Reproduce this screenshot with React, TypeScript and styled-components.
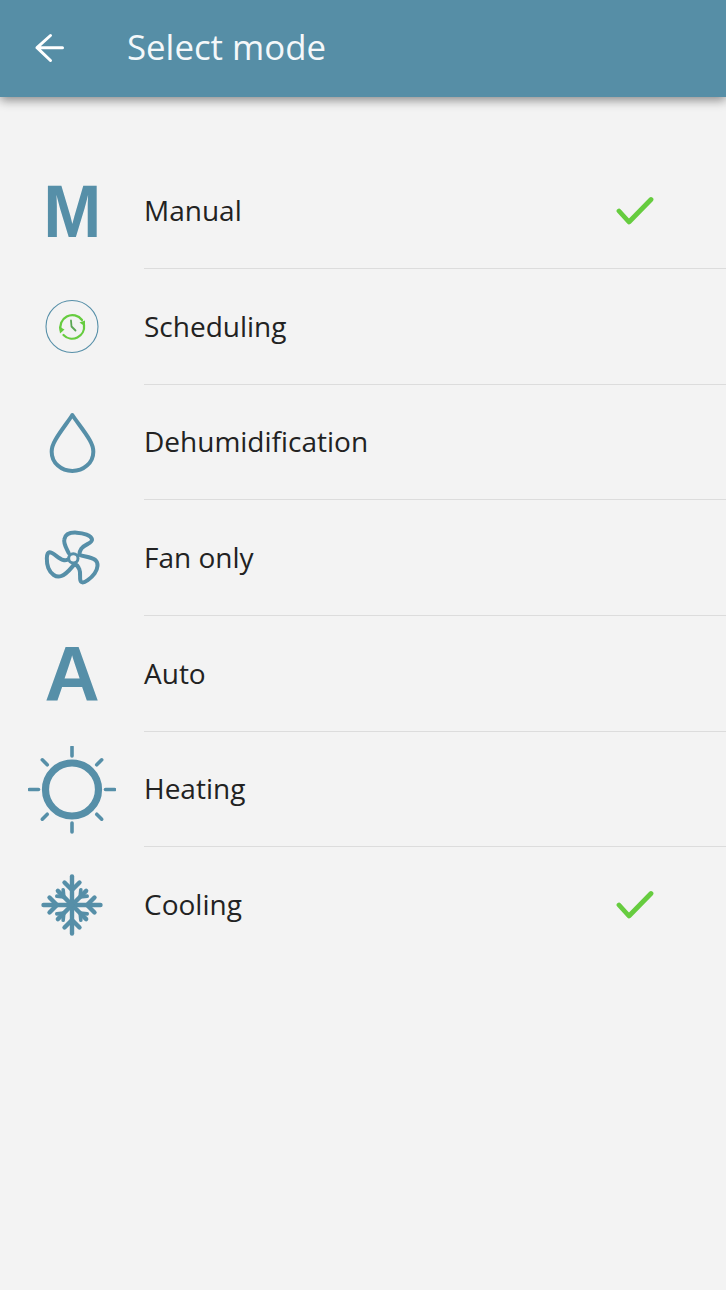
import React from "react";
import styled, { createGlobalStyle } from "styled-components";

const Global = createGlobalStyle`
  html, body { margin: 0; padding: 0; background: #f3f3f3; }
  body { font-family: "Open Sans", "Liberation Sans", sans-serif; }
`;

const Page = styled.div`
  width: 726px;
  height: 1290px;
  background: #f3f3f3;
  overflow: hidden;
`;

const Header = styled.header`
  height: 97px;
  background: #568ea6;
  box-shadow: 0 3px 10px rgba(0, 0, 0, 0.45);
  display: flex;
  align-items: center;
  color: #fff;
`;

const BackButton = styled.div`
  width: 127px;
  height: 97px;
  display: flex;
  align-items: center;
`;

const Title = styled.h1`
  margin: 0 0 3px;
  font-size: 34.8px;
  font-weight: 400;
  color: #f4f8fa;
  line-height: 94px;
`;

const List = styled.div`
  padding-top: 56.4px;
  display: flex;
  flex-direction: column;
`;

const Row = styled.div`
  height: 115.67px;
  display: flex;
  align-items: center;
  padding-left: 28px;
  box-sizing: border-box;
`;

const IconSlot = styled.div`
  width: 88px;
  height: 88px;
  margin-right: 28px;
  flex: none;
  display: flex;
  align-items: center;
  justify-content: center;
  color: #568fa8;
`;

const LetterIcon = styled.span<{ $size: number; $stretch: number }>`
  display: inline-block;
  font-family: "Liberation Sans", Arial, sans-serif;
  font-weight: 700;
  font-size: ${(p) => p.$size}px;
  line-height: 88px;
  color: #568fa8;
  transform: scaleX(${(p) => p.$stretch});
`;

const Body = styled.div<{ $last?: boolean }>`
  flex: 1;
  align-self: stretch;
  display: flex;
  align-items: center;
  justify-content: space-between;
  border-bottom: ${(p) => (p.$last ? "none" : "1px solid #dcdcdc")};
`;

const Label = styled.span`
  font-size: 28px;
  color: #222;
  margin-bottom: 1.5px;
`;

const CheckBox = styled.div`
  width: 110px;
  height: 60px;
  flex: none;
`;

const Check = () => (
  <CheckBox>
    <svg width="110" height="60" viewBox="616 181 110 60" fill="none">
      <path d="M619 211 L629 222 L651 199.5" stroke="#66cc3f" strokeWidth="4.8" strokeLinecap="round" strokeLinejoin="round" />
    </svg>
  </CheckBox>
);

const ClockIcon = () => (
  <svg width="88" height="88" viewBox="0 0 88 88" fill="none">
    <circle cx="44" cy="43.5" r="26" stroke="#568fa8" strokeWidth="1.1" />
    <path d="M33 48 A12 12 0 0 1 54 37" stroke="#66cc3f" strokeWidth="2.3" strokeLinecap="round" />
    <path d="M56 42 A12 12 0 0 1 35.5 52" stroke="#66cc3f" strokeWidth="2.3" strokeLinecap="round" />
    <path d="M31 43.5 L36.5 46.5 L32 50.5 Z" fill="#66cc3f" />
    <path d="M51.5 39.5 L57 37.5 L57 43.5 Z" fill="#66cc3f" />
    <path d="M43 37.5 L43.5 43.5 L47.5 47.5" stroke="#5aa653" strokeWidth="1.8" strokeLinecap="round" strokeLinejoin="round" />
  </svg>
);

const DropIcon = () => (
  <svg width="88" height="88" viewBox="24 -5 264 264" fill="none">
    <path d="M157 43 C145 62 120 93 106 118 C98 132 95 142 95 153 C95 187 124 211 157 211 C190 211 220 187 220 153 C220 142 217 132 209 118 C195 93 169 62 157 43 Z" stroke="currentColor" strokeWidth="12" strokeLinejoin="round" />
  </svg>
);

const FanIcon = () => (
  <svg width="88" height="88" viewBox="24 342 264 264" fill="none">
    <path d="M146 459 C140 445 130 432 133 418 C136 402 152 397 170 398 C190 399 214 406 216 418 C218 430 194 432 184 446 C180 452 178 458 178 464 C190 470 212 470 226 480 C236 488 234 506 224 520 C214 534 192 552 184 546 C176 540 184 522 178 508 C175 500 170 494 164 492 C154 502 144 520 124 528 C108 534 92 522 85 504 C79 488 78 458 88 457 C100 456 114 476 130 480 C134 481 138 481 142 479" stroke="currentColor" strokeWidth="12" strokeLinejoin="round" strokeLinecap="round" />
    <circle cx="160" cy="475" r="14" stroke="currentColor" strokeWidth="9" />
  </svg>
);

const SunIcon = () => {
  const rays = [0, 45, 90, 135, 180, 225, 270, 315];
  return (
    <svg width="88" height="88" viewBox="-44 -43.5 88 88" fill="none">
      <circle r="26.5" stroke="currentColor" strokeWidth="7.2" />
      {rays.map((a) => (
        <line
          key={a}
          x1="0"
          y1={a % 90 === 0 ? -33.5 : -35}
          x2="0"
          y2={a % 90 === 0 ? -42.5 : -42}
          stroke="currentColor"
          strokeWidth="3.6"
          strokeLinecap="round"
          transform={`rotate(${a})`}
        />
      ))}
    </svg>
  );
};

const SnowIcon = () => {
  const arms = [0, 45, 90, 135, 180, 225, 270, 315];
  return (
    <svg width="88" height="88" viewBox="-44 -44 88 88" fill="none">
      {arms.map((a) => (
        <g key={a} transform={`rotate(${a})`} stroke="currentColor" strokeWidth="4.4" strokeLinecap="round" strokeLinejoin="round">
          {a % 90 === 0 ? (
            <>
              <line x1="0" y1="0" x2="0" y2="-28.5" />
              <path d="M-7.5 -22.5 L0 -15 L7.5 -22.5" />
            </>
          ) : (
            <>
              <line x1="0" y1="0" x2="0" y2="-20" />
              <path d="M-4.5 -17 L0 -11.5 L4.5 -17" strokeWidth="3.6" />
            </>
          )}
        </g>
      ))}
    </svg>
  );
};

const BackArrow = () => (
  <svg width="127" height="97" viewBox="0 0 127 97" fill="none">
    <path d="M37 47.7 H62.5 M50.5 35.5 L37 47.7 L50.5 60.5" stroke="#fff" strokeWidth="3" strokeLinecap="round" strokeLinejoin="round" />
  </svg>
);

const modes: { label: string; icon: React.ReactNode; checked?: boolean }[] = [
  { label: "Manual", icon: <LetterIcon $size={75} $stretch={0.93}>M</LetterIcon>, checked: true },
  { label: "Scheduling", icon: <ClockIcon /> },
  { label: "Dehumidification", icon: <DropIcon /> },
  { label: "Fan only", icon: <FanIcon /> },
  { label: "Auto", icon: <LetterIcon $size={78} $stretch={0.98}>A</LetterIcon> },
  { label: "Heating", icon: <SunIcon /> },
  { label: "Cooling", icon: <SnowIcon />, checked: true },
];

export default function App() {
  return (
    <Page>
      <Global />
      <Header>
        <BackButton>
          <BackArrow />
        </BackButton>
        <Title>Select mode</Title>
      </Header>
      <List>
        {modes.map((m, i) => (
          <Row key={m.label}>
            <IconSlot>{m.icon}</IconSlot>
            <Body $last={i === modes.length - 1}>
              <Label>{m.label}</Label>
              {m.checked && <Check />}
            </Body>
          </Row>
        ))}
      </List>
    </Page>
  );
}
